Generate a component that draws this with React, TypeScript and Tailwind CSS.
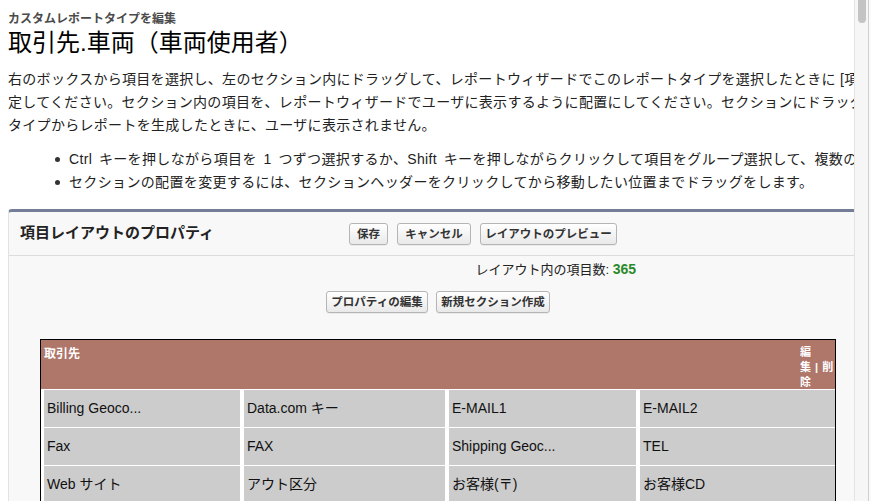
import React from 'react';

const FONT = "font-['Liberation_Sans','Noto_Sans_CJK_JP',sans-serif]";

const PARA_LINES = [
  '右のボックスから項目を選択し、左のセクション内にドラッグして、レポートウィザードでこのレポートタイプを選択したときに [項目を選択] ステップで表示される項目を指',
  '定してください。セクション内の項目を、レポートウィザードでユーザに表示するように配置にしてください。セクションにドラッグされていない項目は、このレポート',
  'タイプからレポートを生成したときに、ユーザに表示されません。',
];

const BULLETS = [
  'Ctrl キーを押しながら項目を 1 つずつ選択するか、Shift キーを押しながらクリックして項目をグループ選択して、複数の項目を一度にドラッグします。',
  'セクションの配置を変更するには、セクションヘッダーをクリックしてから移動したい位置までドラッグをします。',
];

const FIELDS = [
  'Billing Geoco...',
  'Data.com キー',
  'E-MAIL1',
  'E-MAIL2',
  'Fax',
  'FAX',
  'Shipping Geoc...',
  'TEL',
  'Web サイト',
  'アウト区分',
  'お客様(〒)',
  'お客様CD',
];

function Btn({ label, w }: { label: string; w: string }) {
  return (
    <button
      type="button"
      className={`${w} h-[22px] shrink-0 whitespace-nowrap rounded-[3px] border border-[#b5b5b5] bg-gradient-to-b from-white to-[#e9e9e9] text-center text-[11.5px] font-bold leading-[20px] text-[#333] shadow-[0_1px_0_rgba(0,0,0,0.05)]`}
    >
      {label}
    </button>
  );
}

export default function App() {
  return (
    <div className={`${FONT} flex h-[501px] w-[871px] overflow-hidden bg-white text-black`}>
      <div className="w-[854px] shrink-0 overflow-hidden">
        <div className="w-[1000px] pl-2">
          <div className="pt-[12px] text-[12px] font-bold leading-[14px] text-[#4a4a4a]">カスタムレポートタイプを編集</div>
          <h1 className="mt-[3px] text-[24px] leading-[28px] text-black">取引先.車両（車両使用者）</h1>

          <div className="mt-[11px] text-[14px] leading-[23px] tracking-[0.3px] text-[#222]">
            {PARA_LINES.map((l) => (
              <div key={l} className="whitespace-nowrap">{l}</div>
            ))}
          </div>

          <ul className="mt-[11px] pl-[47px] text-[14px] leading-[23px] tracking-[0.35px] [word-spacing:2.5px] text-[#222]">
            {BULLETS.map((b) => (
              <li key={b} className="flex items-center whitespace-nowrap">
                <span className="mr-[9px] inline-block h-[5px] w-[5px] shrink-0 rounded-full bg-[#333]" />
                {b}
              </li>
            ))}
          </ul>

          {/* panel */}
          <div className="mt-[15px] rounded-tl-[4px] border-t-[3px] border-l border-[#747e96] border-l-[#e2e2e2] bg-[#f8f8f8] pb-10">
            <div className="flex h-[44px] items-center border-b border-[#dcdcdc]">
              <h2 className="w-[340px] shrink-0 pl-[11px] text-[15px] font-bold text-[#222]">項目レイアウトのプロパティ</h2>
              <div className="flex gap-[9px]">
                <Btn label="保存" w="w-[39px]" />
                <Btn label="キャンセル" w="w-[74px]" />
                <Btn label="レイアウトのプレビュー" w="w-[137px]" />
              </div>
            </div>

            <div className="ml-[31px] w-[796px]">
              <div className="pr-[200px] pt-[3px] text-right text-[13px] leading-[20px] text-[#222]">
                レイアウト内の項目数: <span className="text-[14px] font-bold text-[#2b8a2b]">365</span>
              </div>
              <div className="mt-[11px] flex justify-center gap-[8px]">
                <Btn label="プロパティの編集" w="w-[102px]" />
                <Btn label="新規セクション作成" w="w-[114px]" />
              </div>

              {/* section */}
              <div className="mt-[26px] border border-black bg-white">
                <div className="flex h-[49px] justify-between bg-[#af766a] text-[11px] font-bold text-white">
                  <span className="pl-[3px] pt-[6px] text-[12px] leading-[16px]">取引先</span>
                  <div className="w-[35px] pt-[5px] text-[11px] leading-[15px]">
                    <div>編</div>
                    <div className="whitespace-nowrap">集 <span className="mx-[1px]">|</span> 削</div>
                    <div>除</div>
                  </div>
                </div>
                <div className="grid grid-cols-[196px_201px_187px_195px] gap-x-[4px] gap-y-[1px] pl-[3px] pt-[1px]">
                  {FIELDS.map((f) => (
                    <div key={f} className="h-[37px] bg-[#cccccc] pl-[3px] pt-[9px] text-[14px] leading-[18px] text-[#111]">
                      {f}
                    </div>
                  ))}
                </div>
              </div>
            </div>
          </div>
        </div>
      </div>

      {/* scrollbar */}
      <div className="relative w-[14px] shrink-0 border-l border-[#e4e4e4] bg-[#f6f6f6]">
        <div className="absolute left-[3px] top-0 h-[23px] w-[8px] rounded-b-full bg-[#c4c4c4]" />
      </div>
      <div className="w-[3px] shrink-0 border-l border-[#cfcfcf] bg-[#fafafa]" />
    </div>
  );
}
